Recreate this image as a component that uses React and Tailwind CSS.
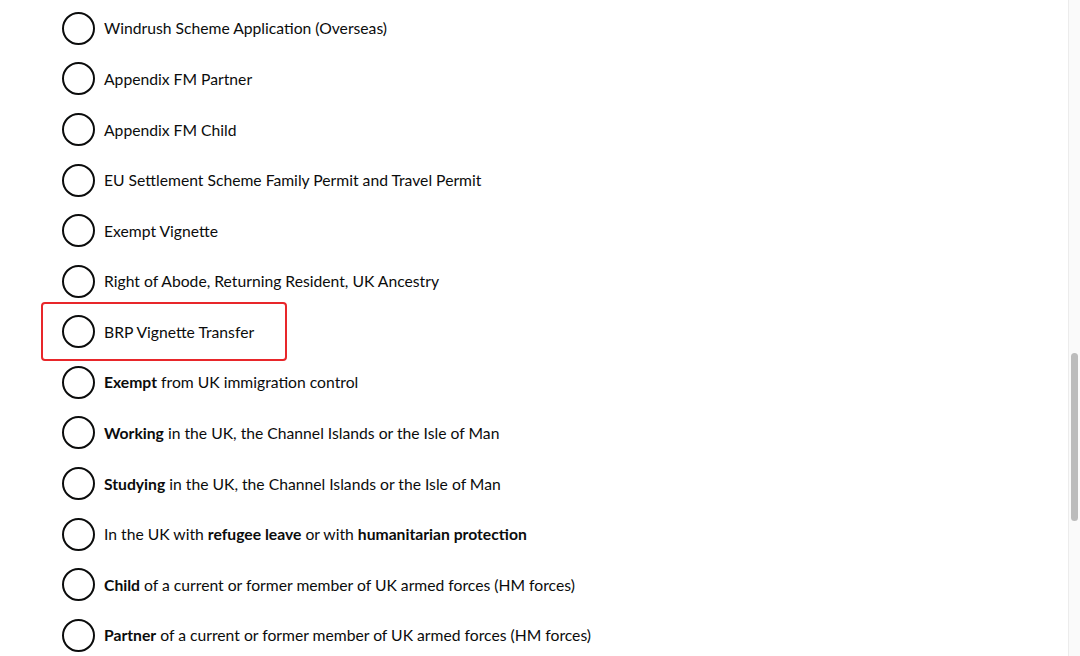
import React from 'react';

const options = [
    [{ t: 'Windrush Scheme Application (Overseas)' }],
    [{ t: 'Appendix FM Partner' }],
    [{ t: 'Appendix FM Child' }],
    [{ t: 'EU Settlement Scheme Family Permit and Travel Permit' }],
    [{ t: 'Exempt Vignette' }],
    [{ t: 'Right of Abode, Returning Resident, UK Ancestry' }],
    [{ t: 'BRP Vignette Transfer' }],
    [{ t: 'Exempt', b: true }, { t: ' from UK immigration control' }],
    [{ t: 'Working', b: true }, { t: ' in the UK, the Channel Islands or the Isle of Man' }],
    [{ t: 'Studying', b: true }, { t: ' in the UK, the Channel Islands or the Isle of Man' }],
    [{ t: 'In the UK with ' }, { t: 'refugee leave', b: true }, { t: ' or with ' }, { t: 'humanitarian protection', b: true }],
    [{ t: 'Child', b: true }, { t: ' of a current or former member of UK armed forces (HM forces)' }],
    [{ t: 'Partner', b: true }, { t: ' of a current or former member of UK armed forces (HM forces)' }],
];

const App = () => {
    return (
        <div className="flex h-[656px] w-[1080px] overflow-hidden bg-white text-[#0b0c0c]" style={{ fontFamily: 'Lato, "Liberation Sans", sans-serif' }}>
            <div className="flex-1 pt-[3px]">
                {options.map((parts, i) => (
                    <div key={i} className="relative flex h-[50.58px] items-center pl-[62px]">
                        {/* highlighted option */}
                        {i === 6 && (
                            <div className="absolute left-[41px] top-[-4px] h-[59px] w-[246px] rounded-[4px] border-2 border-[#e8262a]" />
                        )}
                        <span className="h-[33px] w-[33px] flex-shrink-0 rounded-full border-2 border-[#0b0c0c]" />
                        <span className="ml-[9px] mt-[2px] text-[15.7px] leading-none">
                            {parts.map((p, j) => (
                                <span key={j} className={p.b ? 'font-bold' : ''}>{p.t}</span>
                            ))}
                        </span>
                    </div>
                ))}
            </div>

            {/* Scrollbar */}
            <div className="flex w-[12px] flex-col border-l border-[#ececec] bg-[#fafafa]">
                <div className="ml-[2px] mt-[353px] h-[168px] w-[7px] rounded-full bg-[#bcbcbc]" />
            </div>
        </div>
    );
};

export default App;
